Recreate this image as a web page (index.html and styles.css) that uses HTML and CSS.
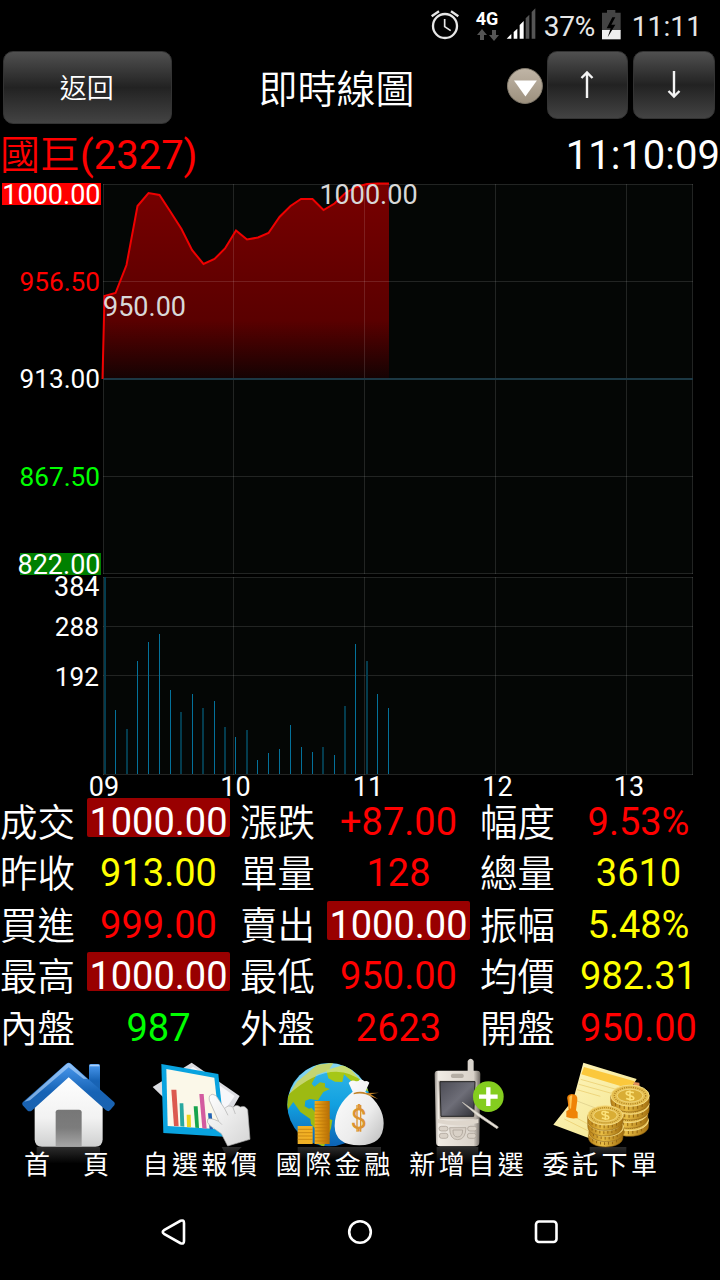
FILE: index.html
```html
<!DOCTYPE html>
<html lang="zh-TW">
<head>
    <meta charset="UTF-8">
    <meta name="viewport" content="width=device-width, initial-scale=1.0">
    <title>即時線圖</title>
    <link rel="stylesheet" href="styles.css">
</head>
<body>
    <div class="statusbar">
        <svg class="alarm" width="30" height="32" viewBox="90 28 90 96" fill="none" stroke="#e6e6e6">
            <circle cx="135" cy="79" r="36" stroke-width="7"/>
            <path d="M134 58v23l18 12" stroke-width="5"/>
            <path d="M95 50l22-15M175 50l-22-15" stroke-width="7"/>
        </svg>
        <div class="network">
            <span>4G</span>
            <svg width="24" height="12" viewBox="0 0 24 12" fill="#555"><path d="M6 0l5 6H8v5H4V6H1zM18 12l5-6h-3V1h-4v5h-3z"/></svg>
        </div>
        <svg class="signal" width="30" height="32" viewBox="320 24 90 96">
            <path fill="#fff" d="M322 116l14-14v14zM343 116V96l11-10v30zM361 116V75l12-12v53z"/>
            <path fill="#555" d="M379 116V55l11-11v72zM397 116V36l11-11v91z"/>
        </svg>
        <span class="percent">37%</span>
        <svg class="battery" width="19" height="30" viewBox="610 30 57 90">
            <path fill="#444" d="M625 30h25v8h16v54H610V38h15z"/>
            <path fill="#eee" d="M610 90h56v28h-56z"/>
            <path fill="#000" d="M641 52l-17 33h12l-9 27 23-38h-12l12-22z"/>
        </svg>
        <span class="clock">11:11</span>
    </div>

    <div class="header">
        <button class="btn back">返回</button>
        <h1>即時線圖</h1>
        <svg class="dropdown" width="38" height="38" viewBox="0 0 38 38">
            <defs>
                <linearGradient id="knob" x1="0" y1="0" x2="0" y2="1">
                    <stop offset="0" stop-color="#c0b5a6"/>
                    <stop offset="1" stop-color="#9c907e"/>
                </linearGradient>
            </defs>
            <circle cx="19" cy="19" r="17.5" fill="url(#knob)" stroke="#857c6e"/>
            <path d="M8 13.500h23L19.500 29.500z" fill="#fff"/>
        </svg>
        <button class="btn arrow"><svg width="16" height="30" viewBox="0 0 16 30"><path d="M8 28V3M2.500 8L8 2.500 13.500 8"/></svg></button>
        <button class="btn arrow"><svg width="16" height="30" viewBox="0 0 16 30"><path d="M8 1v25M2.500 21L8 26.500l5.500-5.500"/></svg></button>
    </div>

    <div class="stock">
        <span class="name">國巨<span class="code">(2327)</span></span>
        <span class="time">11:10:09</span>
    </div>

    <svg class="chart" width="720" height="618" viewBox="0 180 720 618">
        <defs>
            <linearGradient id="area" gradientUnits="userSpaceOnUse" x1="0" y1="184" x2="0" y2="379">
                <stop offset="0" stop-color="#780000"/>
                <stop offset="0.700" stop-color="#5a0000"/>
                <stop offset="1" stop-color="#140303"/>
            </linearGradient>
        </defs>
        <path fill="#040605" d="M103 184h590v390H103zM103 577h590v198H103z"/>
        <path fill="url(#area)" d="M103 379L104.500 296 115.500 293 126.500 265 137.500 206 148.500 193 159.500 195 170 211 181.500 229 192 250 203.500 264 214.500 259 225 248.500 236 230.500 247 239.500 258 237.500 268.500 233 279.500 217 290.500 206 301 199 312.500 199 323.500 210 334.500 203.500 345.500 193 356 187 367 184H389V379z"/>
        <g class="grid">
            <path d="M103.500 184v390M233.500 184v390M364.500 184v390M495.500 184v390M626.500 184v390M692.500 184v390"/>
            <path d="M103 184.500h590M103 281.500h590M103 476.500h590M103 573.500h590"/>
            <path d="M103.500 577v198M233.500 577v198M364.500 577v198M495.500 577v198M626.500 577v198M692.500 577v198"/>
            <path d="M103 577.500h590M103 626.500h590M103 675.500h590M103 774.500h590"/>
        </g>
        <path class="base" d="M103 379h590"/>
        <polyline class="price" points="102.500,379 104.500,296 115.500,293 126.500,265 137.500,206 148.500,193 159.500,195 170,211 181.500,229 192,250 203.500,264 214.500,259 225,248.500 236,230.500 247,239.500 258,237.500 268.500,233 279.500,217 290.500,206 301,199 312.500,199 323.500,210 334.500,203.500 345.500,193 356,187 367,184 378,183.500 389,183.500"/>
        <!-- volume -->
        <path class="vol" d="M115.500 774v-64M137.500 774V661M148.500 774V642M159.500 774V634M170.500 774V690M192.500 774V694M214.500 774V701M235.500 774V737M257.500 774V760M268.500 774V753M279.500 774V749M290.500 774V725M301.500 774V747M312.500 774V752M334.500 774V755M355.500 774V644M377.500 774V694M388.500 774V708"/>
        <path class="vol wide" d="M105 774V577M127 774V729M181 774V712M203 774V708M225 774V727M247 774V730M323 774V747M345 774V706M367 774V661"/>
        <rect x="2" y="183" width="99" height="22" fill="#f00"/>
        <rect x="20" y="553" width="81" height="22" fill="#008000"/>
        <g class="axis">
            <text x="100.500" y="203.500">1000.00</text>
            <text class="narrow" x="100" y="290.500" fill="#f00">956.50</text>
            <text class="narrow" x="100" y="388">913.00</text>
            <text class="narrow" x="100" y="485.500" fill="#0f0">867.50</text>
            <text x="100.500" y="574">822.00</text>
            <text x="99.500" y="596">384</text>
            <text class="narrow" x="99" y="635.500">288</text>
            <text class="narrow" x="99" y="685.500">192</text>
        </g>
        <g class="axis mid">
            <text x="104" y="796">09</text>
            <text x="235.500" y="796">10</text>
            <text x="368" y="796">11</text>
            <text x="497.500" y="796">12</text>
            <text x="629" y="796">13</text>
            <text x="368.500" y="203.500" fill="#d8d8d8">1000.00</text>
            <text x="144.500" y="315.500" fill="#d8d8d8">950.00</text>
        </g>
    </svg>

    <div class="quotes">
        <div class="label">成交</div><div class="value limit">1000.00</div>
        <div class="label">漲跌</div><div class="value up">+87.00</div>
        <div class="label">幅度</div><div class="value up">9.53%</div>

        <div class="label">昨收</div><div class="value">913.00</div>
        <div class="label">單量</div><div class="value up">128</div>
        <div class="label">總量</div><div class="value">3610</div>

        <div class="label">買進</div><div class="value up">999.00</div>
        <div class="label">賣出</div><div class="value limit">1000.00</div>
        <div class="label">振幅</div><div class="value">5.48%</div>

        <div class="label">最高</div><div class="value limit">1000.00</div>
        <div class="label">最低</div><div class="value up">950.00</div>
        <div class="label">均價</div><div class="value">982.31</div>

        <div class="label">內盤</div><div class="value down">987</div>
        <div class="label">外盤</div><div class="value up">2623</div>
        <div class="label">開盤</div><div class="value up">950.00</div>
    </div>

    <div class="toolbar">
        <div class="tool">
            <svg viewBox="0 15 400 285">
                <defs>
                    <linearGradient id="roof" x1="0" y1="0" x2="0" y2="1">
                        <stop offset="0" stop-color="#4b9af0"/><stop offset="0.600" stop-color="#1763b5"/><stop offset="1" stop-color="#1a62b0"/>
                    </linearGradient>
                    <linearGradient id="wall" x1="0" y1="0" x2="0" y2="1">
                        <stop offset="0" stop-color="#fff"/><stop offset="0.600" stop-color="#f2f2f2"/><stop offset="1" stop-color="#cfd0d0"/>
                    </linearGradient>
                    <linearGradient id="door" x1="0" y1="0" x2="0" y2="1">
                        <stop offset="0" stop-color="#777"/><stop offset="0.500" stop-color="#7c7c7c"/><stop offset="1" stop-color="#a5a5a5"/>
                    </linearGradient>
                    <linearGradient id="shade" x1="0" y1="0" x2="0" y2="1">
                        <stop offset="0" stop-color="#2c2c2c"/><stop offset="1" stop-color="#000"/>
                    </linearGradient>
                </defs>
                <path d="M110 291h190v50H110z" fill="url(#shade)"/>
                <path d="M267 48q0-6 6-6h21q6 0 6 6v78l-33-32z" fill="url(#roof)"/>
                <path d="M269 44h29v5h-29z" fill="#a9d0fb"/>
                <path d="M104 160L206 75l102 85v108q0 22-22 22H126q-22 0-22-22z" fill="url(#wall)"/>
                <path d="M167 289V187q0-8 8-8h62q8 0 8 8v102z" fill="url(#door)"/>
                <path d="M199 41q7-5 14 0l130 116q3 4 0 9l-13 15q-5 5-12 0L206 82 95 182q-7 4-12 0l-15-16q-3-5 0-9z" fill="url(#roof)"/>
                <path d="M73 155L200 42q6-4 12 0l50 45-12-1-44-34L90 151z" fill="#bddcff" opacity=".6"/>
            </svg>
            <span>首　頁</span>
        </div>
        <div class="tool">
            <svg viewBox="0 15 400 285">
                <defs>
                    <linearGradient id="hand" x1="0" y1="0" x2="1" y2="1">
                        <stop offset="0" stop-color="#fff"/><stop offset="1" stop-color="#d5d5d5"/>
                    </linearGradient>
                </defs>
                <path d="M266 291h60l-40 40z" fill="url(#shade)"/>
                <path d="M59 111L176 38l144 100-40 70-100 20z" fill="#dcdde2"/>
                <path d="M100 110l80-60 125 88-35 50z" fill="#f7f7fa"/>
                <path d="M85 42l171 30 20 188L91 249z" fill="#09a3df"/>
                <path d="M100 57l144 26 17 155-157-10z" fill="#fbf8e9"/>
                <path d="M115 119h15l7 110-14-1z" fill="#dc5a50"/>
                <path d="M140 160h11l3 70-12-1z" fill="#28a8a0"/>
                <path d="M161 194h12l1 38-12-1z" fill="#ead51d"/>
                <path d="M182 169h12l4 65-11-1z" fill="#16a44d"/>
                <path d="M199 132h13l9 104-13-1z" fill="#d35b9f"/>
                <path d="M225 190h11l4 48h-10z" fill="#2364b5"/>
                <path d="M284 288l-19-37-34-24q-12-11-7-19 8-6 33 6l-28-63q-3-17 10-18 10 0 17 14l19 29q10-14 25-4 10-11 22-1 15-6 22 9l7 88z" fill="url(#hand)" stroke="#aaa" stroke-width="2"/>
                <path d="M275 176l10 20M300 173l7 19M257 214l10 10" fill="none" stroke="#bbb" stroke-width="2.500"/>
            </svg>
            <span>自選報價</span>
        </div>
        <div class="tool">
            <svg viewBox="5 15 400 285">
                <defs>
                    <linearGradient id="sea" x1="0" y1="0" x2="0" y2="1">
                        <stop offset="0" stop-color="#35b9e8"/><stop offset="0.500" stop-color="#12a0e0"/><stop offset="1" stop-color="#0c62b4"/>
                    </linearGradient>
                    <linearGradient id="gold" x1="0" y1="0" x2="1" y2="0">
                        <stop offset="0" stop-color="#eeb02a"/><stop offset="0.500" stop-color="#f5b21f"/><stop offset="1" stop-color="#b86d03"/>
                    </linearGradient>
                    <linearGradient id="bag" x1="0" y1="0" x2="1" y2="1">
                        <stop offset="0" stop-color="#fff"/><stop offset="0.600" stop-color="#ececec"/><stop offset="1" stop-color="#bbb"/>
                    </linearGradient>
                    <clipPath id="earth"><circle cx="191" cy="164" r="125"/></clipPath>
                </defs>
                <path d="M97 291h250v40H97z" fill="url(#shade)"/>
                <circle cx="191" cy="164" r="125" fill="url(#sea)"/>
                <g clip-path="url(#earth)">
                    <path d="M60 150l35-55 60-50 50-7-16 24-35 12-15 27 8 9 17-13 15 3v12l15 5-20 9-16 25-24-4-14 5-2 17 13 7 8-3 16 21 46 16-4 25-22 57-16-10-4-40-18-20-2-15-30-21-21-30-20 27z" fill="#9dba12"/>
                    <path d="M183 60l60-17 80 90-60-35-27-25-5 23-22-1-20-10z" fill="#a6c716"/>
                    <path d="M68 135Q105 38 200 39q62 2 96 59-95-80-228 37z" fill="#fff" opacity=".4"/>
                </g>
                <path d="M97 228h45v54H97zM148 153h45v129h-45z" fill="url(#gold)"/>
                <path d="M97 238h45M97 248h45M97 258h45M97 268h45M148 163h45M148 173h45M148 183h45M148 193h45M148 203h45M148 213h45M148 223h45M148 233h45M148 243h45M148 253h45M148 263h45M148 273h45" stroke="#b9770a" stroke-width="2"/>
                <path d="M250 99q5-10 18-7 10 5 15-3 8-1 15 5 9-3 14 4l-12 27q55 43 55 95 0 66-73 66t-74-58q0-60 54-103z" fill="url(#bag)"/>
                <path d="M265 129q20-7 38 0l38-1-25 5 23 15-38-15q-18-5-36 0z" fill="#c1842a"/>
                <text x="280" y="238" class="dollar">$</text>
                <path d="M275 165v80M286 165v80" stroke="#dc9430" stroke-width="4"/>
            </svg>
            <span>國際金融</span>
        </div>
        <div class="tool">
            <svg viewBox="0 15 400 285">
                <defs>
                    <linearGradient id="phone" x1="0" y1="0" x2="1" y2="0">
                        <stop offset="0" stop-color="#8f8983"/><stop offset="0.080" stop-color="#f0ebe4"/><stop offset="0.850" stop-color="#d9d2c9"/><stop offset="1" stop-color="#6e6862"/>
                    </linearGradient>
                    <linearGradient id="screen" x1="0" y1="0" x2="1" y2="1">
                        <stop offset="0" stop-color="#4c4c55"/><stop offset="0.500" stop-color="#6e6e78"/><stop offset="1" stop-color="#303036"/>
                    </linearGradient>
                </defs>
                <path d="M110 291h125v50H110z" fill="url(#shade)"/>
                <path d="M203 65V33q9-14 18 0v35z" fill="#d8d3cc"/>
                <path d="M104 72q0-10 10-10h117q10 0 10 10l-3 205q0 12-12 12H120q-12 0-12-12z" fill="url(#phone)"/>
                <rect x="153" y="71" width="38" height="13" rx="5" fill="#b5aea5"/>
                <path d="M115 92h116l-4 114H119z" fill="#b5aca3"/>
                <path d="M120 95h105l-4 104H123z" fill="url(#screen)" stroke="#222" stroke-width="3"/>
                <path d="M113 207q60 14 122 0v12q-60 14-122 0z" fill="#ded6cc"/>
                <g fill="#d9d1c7" stroke="#a39a90" stroke-width="2">
                    <path d="M149 233h49q-1 36-25 36t-24-36z"/><path d="M159 240h29q0 21-15 21t-14-21z"/>
                    <rect x="117" y="229" width="27" height="14" rx="7"/><rect x="203" y="229" width="27" height="14" rx="7"/>
                    <rect x="118" y="250" width="26" height="15" rx="7"/><rect x="202" y="250" width="26" height="15" rx="7"/>
                </g>
                <circle cx="265" cy="140" r="46" fill="#84cd1f"/>
                <path d="M237 140h56M265 112v56" stroke="#fff" stroke-width="13"/>
                <path d="M187 157l108 74-4 5-60-40z" fill="#e7e1d8" stroke="#c9c2b8" stroke-width="2"/>
            </svg>
            <span>新增自選</span>
        </div>
        <div class="tool">
            <svg viewBox="0 15 400 285">
                <defs>
                    <linearGradient id="paper" x1="0" y1="0" x2="1" y2="1">
                        <stop offset="0" stop-color="#fff5bd"/><stop offset="1" stop-color="#f2e58e"/>
                    </linearGradient>
                    <linearGradient id="coin" x1="0" y1="0" x2="1" y2="0">
                        <stop offset="0" stop-color="#b98218"/><stop offset="0.400" stop-color="#e8bd45"/><stop offset="1" stop-color="#a4700f"/>
                    </linearGradient>
                    <g id="disc">
                        <path d="M-60 0v18c0 44 120 44 120 0V0z" fill="url(#coin)" stroke="#8d6011" stroke-width="2"/>
                        <path d="M-45 19v13M-32 24v14M-18 28v14M-4 30v14M10 29v14M24 27v14M38 22v13" stroke="#8f6110" stroke-width="3"/>
                        <ellipse rx="60" ry="33" fill="#e6c052" stroke="#f5dc86" stroke-width="3"/>
                        <ellipse rx="49" ry="26" fill="none" stroke="#a7791c" stroke-width="4" stroke-dasharray="3 4"/>
                        <ellipse rx="40" ry="20" fill="#d9ad35" stroke="#fbe79a" stroke-width="2"/>
                        <path d="M12-9q-24-8-24 1 0 6 12 8t12 8q0 9-24 1M0-16v32" fill="none" stroke="#fbe27b" stroke-width="5"/>
                    </g>
                </defs>
                <path d="M170 291h110v40H170z" fill="url(#shade)"/>
                <path d="M151 38l160 49-70 120-60 62L61 224l60-76z" fill="url(#paper)"/>
                <path d="M153 51l152 43-10 24-150-45z" fill="#fbc83c"/>
                <path d="M143 88l110 31M138 103l105 29M132 119l70 20M105 190l65 35M94 207l74 37" stroke="#e8c866" stroke-width="2"/>
                <path d="M124 150l90 34" stroke="#d8c987" stroke-width="2"/>
                <path d="M302 96l17 2 1 12-18-2z" fill="#e2905a"/>
                <path d="M104 152q-6-18 12-20 19 0 17 19l-4 30 5 6v17q-17 4-34-3v-17l7-5z" fill="#ef8307"/>
                <path d="M109 141q3-6 9-5l-4 40-4-1z" fill="#ffc452"/>
                <use href="#disc" transform="translate(290 211) scale(.94)"/><use href="#disc" transform="translate(288 187) scale(.94)"/><use href="#disc" transform="translate(292 162) scale(.94)"/><use href="#disc" transform="translate(291 137) scale(.96)"/>
                <use href="#disc" transform="translate(218 247) scale(.86)"/><use href="#disc" transform="translate(220 231) scale(.86)"/><use href="#disc" transform="translate(216 214) scale(.86)"/><use href="#disc" transform="translate(217 196) scale(.88)"/>
            </svg>
            <span>委託下單</span>
        </div>
    </div>

    <div class="navbar">
        <svg width="28" height="30" viewBox="0 0 28 30"><path d="M4 13.200L20.500 3.800Q24 2.500 24 6v18q0 3.500-3.500 2.200L4 16.800q-2.500-1.800 0-3.600z"/></svg>
        <svg width="28" height="30" viewBox="0 0 28 30"><circle cx="14" cy="15" r="10.800"/></svg>
        <svg width="28" height="30" viewBox="0 0 28 30"><rect x="4" y="4.500" width="20.500" height="20.500" rx="3"/></svg>
    </div>
</body>
</html>
```
FILE: styles.css
```css
* {
    box-sizing: border-box;
}
body {
    margin: 0;
    width: 720px;
    height: 1280px;
    overflow: hidden;
    background: #000;
    color: #fff;
    font-family: Roboto, "Noto Sans CJK TC", sans-serif;
    display: flex;
    flex-direction: column;
}
.statusbar {
    height: 51px;
    display: flex;
    justify-content: flex-end;
    align-items: flex-start;
    padding: 9px 18px 0 0;
    font-size: 28px;
    line-height: 36px;
    color: #e6e6e6;
}
.alarm {
    margin: 0 16px 0 0;
}
.network {
    width: 24px;
    height: 34px;
    margin-right: 6px;
    display: flex;
    flex-direction: column;
}
.network span {
    color: #fff;
    font-size: 18px;
    font-weight: bold;
    line-height: 20px;
}
.signal {
    margin-top: -1px;
}
.percent {
    width: 54px;
    margin: 0 4px 0 8px;
    letter-spacing: -0.3px;
}
.battery {
    margin: 1px 11px 0 0;
}
.clock {
    letter-spacing: 0.1px;
}
.header {
    height: 82px;
    display: flex;
    align-items: flex-start;
    padding-left: 3px;
}
.btn {
    border: 1px solid #333;
    border-radius: 10px;
    background: linear-gradient(#505050, #222 50%, #434343);
    color: #fff;
    padding: 0;
    display: flex;
    justify-content: center;
    align-items: center;
    font-family: inherit;
}
.back {
    width: 170px;
    height: 73px;
    font-size: 27px;
    font-weight: 350;
    padding: 0 2px 3px 0;
}
.arrow {
    width: 82px;
    height: 68px;
    margin-right: 5px;
}
.arrow path {
    fill: none;
    stroke: #f4f4f4;
    stroke-width: 2.4;
}
h1 {
    margin: 0 0 0 86px;
    width: 248px;
    font-size: 39px;
    line-height: 79px;
    font-weight: 350;
}
.dropdown {
    margin: 16px 3px 0 0;
}
.stock {
    height: 47px;
    display: flex;
    justify-content: space-between;
    font-size: 40px;
    line-height: 46px;
}
.name {
    color: #f00;
    font-weight: 350;
}
.code {
    font-weight: 400;
}
.chart {
    flex: none;
    display: block;
    overflow: visible;
}
.grid path {
    fill: none;
    stroke: #fff;
    stroke-opacity: 0.12;
}
.base {
    stroke: #1c3844;
    stroke-width: 2;
}
.price {
    fill: none;
    stroke: #f00000;
    stroke-width: 2;
}
.vol {
    stroke: #04719a;
}
.wide {
    stroke: #043c4e;
    stroke-width: 2;
}
.axis {
    font-size: 27px;
    fill: #fff;
    text-anchor: end;
}
.narrow {
    font-size: 26.2px;
}
.mid {
    text-anchor: middle;
}
.quotes {
    display: grid;
    grid-template-columns: repeat(3, 87px 153px);
    grid-auto-rows: 51.4px;
}
.label {
    font-size: 37.5px;
    line-height: 50px;
    font-weight: 350;
}
.value {
    width: 143px;
    height: 39px;
    line-height: 49px;
    font-size: 38px;
    text-align: center;
    color: #ff0;
}
.up {
    color: #f00;
}
.down {
    color: #0f0;
}
.limit {
    color: #fff;
    background: #900;
    border-radius: 2px;
}
.toolbar {
    height: 129px;
    display: flex;
}
.tool {
    width: 133.33px;
    display: flex;
    flex-direction: column;
    align-items: center;
}
.tool svg {
    width: 133.33px;
    height: 95px;
    flex: none;
    overflow: visible;
}
.tool span {
    position: relative;
    font-size: 26px;
    line-height: 30px;
    letter-spacing: 3.5px;
    margin-right: -3px;
    white-space: nowrap;
}
.dollar {
    font-size: 88px;
    text-anchor: middle;
    fill: #dc9430;
}
.navbar {
    display: flex;
    justify-content: space-between;
    padding: 33px 160px 0 160px;
}
.navbar svg {
    fill: none;
    stroke: #fff;
    stroke-width: 2.6;
}
```
